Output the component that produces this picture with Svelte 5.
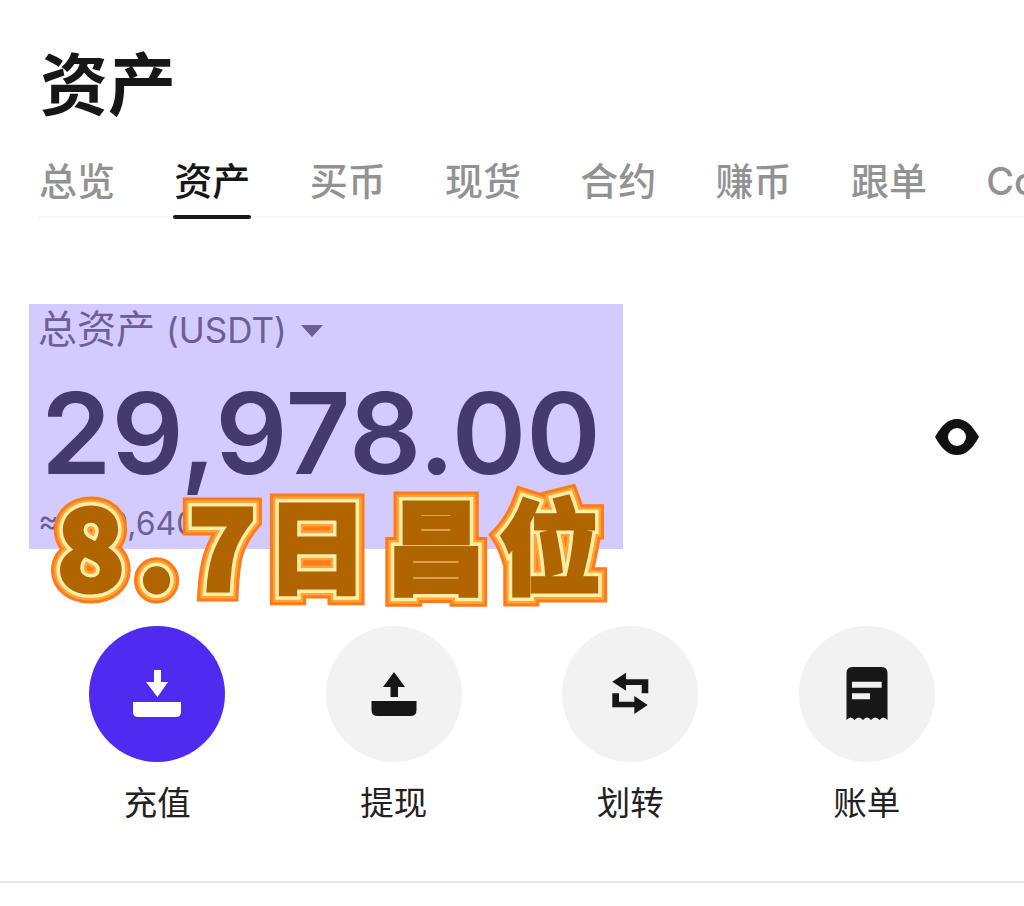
<script>
  const tabs = ['总览', '资产', '买币', '现货', '合约', '赚币', '跟单', 'Copy'];
  const banner = ['8.', '7', '日', '昌', '位'];
</script>

<div class="page">
  <h1 class="title">资产</h1>

  <nav class="tabs">
    {#each tabs as t, i}
      <span class="tab" class:active={i === 1}>{t}</span>
    {/each}
  </nav>

  <section class="summary">
    <div class="highlight">
      <div class="label">
        <span>总资产 <span class="latin">(USDT)</span></span>
        <svg class="caret" viewBox="0 0 22 14" width="22" height="14"><path d="M0 1h22L11 13z" fill="#6b5f95" /></svg>
      </div>
      <div class="amount">29,978.00</div>
      <div class="approx">≈ $29,640.36</div>
    </div>

    <svg class="eye" viewBox="0 0 44 36" width="44" height="36">
      <path fill="#111" fill-rule="evenodd" d="M0 18C7 6 13 0 22 0s15 6 22 18c-7 12-13 18-22 18S7 30 0 18zM22 9a9 9 0 1 0 0 18a9 9 0 0 0 0-18z" />
    </svg>

    <div class="banner">
      {#each banner as ch, i}
        <span class="seg s{i}" data-t={ch}><span class="glyph" data-t={ch}>{ch}</span></span>
      {/each}
    </div>
  </section>

  <section class="actions">
    <div class="action">
      <div class="circle primary">
        <svg viewBox="0 0 48 48" width="48" height="48" fill="#fff">
          <path d="M21 0h7v12h7L24.500 27 13 12h8z" />
          <path d="M0 32h48v10q0 5-5 5H5q-5 0-5-5z" />
        </svg>
      </div>
      <span class="caption">充值</span>
    </div>
    <div class="action">
      <div class="circle">
        <svg viewBox="0 0 48 48" width="48" height="48" fill="#171717">
          <path d="M24 2l11 15h-7v10h-7.500V17H13z" />
          <path d="M1.500 31h45v9q0 6-6 6h-33q-6 0-6-6z" />
        </svg>
      </div>
      <span class="caption">提现</span>
    </div>
    <div class="action">
      <div class="circle">
        <svg viewBox="0 0 40 44" width="40" height="44" fill="#171717">
          <path d="M16 .7v6.600h22.300v14h-6.600V13H16v5.700L2.300 9.700z" />
          <path d="M2.300 21.300H9v8.400h15.300V24L37.700 33 24.300 42v-6.700h-22z" />
        </svg>
      </div>
      <span class="caption">划转</span>
    </div>
    <div class="action">
      <div class="circle">
        <svg viewBox="0 0 42 54" width="42" height="54">
          <path fill="#171717" d="M.5 6q0-6 6-6h29q6 0 6 6v47q-2-2.500-4-2.500t-4 2.500q-2-2.500-4.200-2.500T25 53q-2-2.500-4-2.500T17 53q-2-2.500-4.200-2.500T8.500 53q-2-2.500-4-2.500T.5 53z" />
          <path fill="#f2f2f2" d="M6 14.700h29.700v6H6zM6 26.300h18v6H6z" />
        </svg>
      </div>
      <span class="caption">账单</span>
    </div>
  </section>

  <div class="divider"></div>
</div>

<style>
  :global(body) {
    margin: 0;
    background: #fff;
  }
  .page {
    width: 1024px;
    height: 906px;
    overflow: hidden;
    font-family: 'Inter', 'Noto Sans CJK SC', sans-serif;
    color: #171717;
  }
  .title {
    margin: 0;
    padding: 36px 0 0 40px;
    height: 98px;
    font-size: 68px;
    line-height: 98px;
    font-weight: 700;
    color: #171717;
  }
  .tabs {
    display: flex;
    gap: 59.300px;
    margin: 0 0 0 39px;
    height: 84px;
    align-items: flex-start;
    border-bottom: 2px solid #f5f5f5;
    box-sizing: border-box;
    white-space: nowrap;
  }
  .tab {
    font-size: 38px;
    line-height: 48px;
    margin-top: 23px;
    font-weight: 500;
    color: #929292;
    position: relative;
    flex: none;
  }
  .tab.active {
    color: #171717;
  }
  .tab.active::after {
    content: '';
    position: absolute;
    left: -1px;
    right: -1px;
    top: 58px;
    height: 4px;
    border-radius: 2px;
    background: #171717;
  }
  .summary {
    position: relative;
    height: 322px;
    padding-top: 86px;
  }
  .highlight {
    width: 594px;
    height: 245px;
    margin-left: 29px;
    background: #d3cbfe;
    padding: 0 0 0 9px;
    box-sizing: border-box;
    overflow: hidden;
  }
  .label {
    display: flex;
    align-items: center;
    gap: 14px;
    font-size: 39px;
    line-height: 50px;
    color: #6b5f95;
  }
  .latin {
    font-size: 35px;
  }
  .caret {
    margin-top: 3px;
  }
  .amount {
    font-size: 113px;
    line-height: 128px;
    margin-top: 14px;
    font-weight: 600;
    color: #453a6e;
    margin-left: 3px;
    white-space: nowrap;
  }
  .approx {
    font-size: 32px;
    line-height: 44px;
    margin-top: 5px;
    color: #6b5f95;
    white-space: nowrap;
  }
  .eye {
    position: absolute;
    left: 935px;
    top: 201px;
  }
  .banner {
    position: absolute;
    z-index: 0;
    left: 56px;
    top: 258px;
    display: flex;
    align-items: center;
    font-family: 'Noto Sans CJK SC', sans-serif;
    font-weight: 900;
    font-size: 114px;
    line-height: 130px;
    white-space: nowrap;
    color: #b06500;
    -webkit-text-stroke: 3px #b06500;
  }
  .seg,
  .glyph {
    display: block;
    position: relative;
  }
  .s0 {
    letter-spacing: 11px;
  }
  .s1 {
    letter-spacing: 9px;
  }
  .s2,
  .s3,
  .s4 {
    font-size: 102px;
    margin-top: 1px;
  }
  .s2 {
    letter-spacing: 17px;
  }
  .s3 {
    letter-spacing: 12px;
  }
  .seg::before,
  .seg::after,
  .glyph::before {
    content: attr(data-t);
    position: absolute;
    left: 0;
    top: 0;
  }
  .seg::before {
    z-index: -3;
    color: #ff7a1a;
    -webkit-text-stroke: 21px #ff7a1a;
  }
  .seg::after {
    z-index: -2;
    color: #ffa436;
    -webkit-text-stroke: 15px #ffa436;
  }
  .glyph::before {
    z-index: -1;
    color: #ffeea8;
    -webkit-text-stroke: 10px #ffeea8;
  }
  .actions {
    display: grid;
    grid-template-columns: repeat(4, 236.500px);
    padding-left: 39px;
  }
  .action {
    display: flex;
    flex-direction: column;
    align-items: center;
  }
  .circle {
    width: 136px;
    height: 136px;
    border-radius: 50%;
    background: #f2f2f2;
    display: flex;
    align-items: center;
    justify-content: center;
  }
  .circle.primary {
    background: #4f2bf2;
  }
  .caption {
    margin-top: 17px;
    font-size: 33.500px;
    line-height: 48px;
    color: #222;
  }
  .divider {
    margin-top: 54px;
    height: 2px;
    background: #e6e6e6;
  }
</style>
